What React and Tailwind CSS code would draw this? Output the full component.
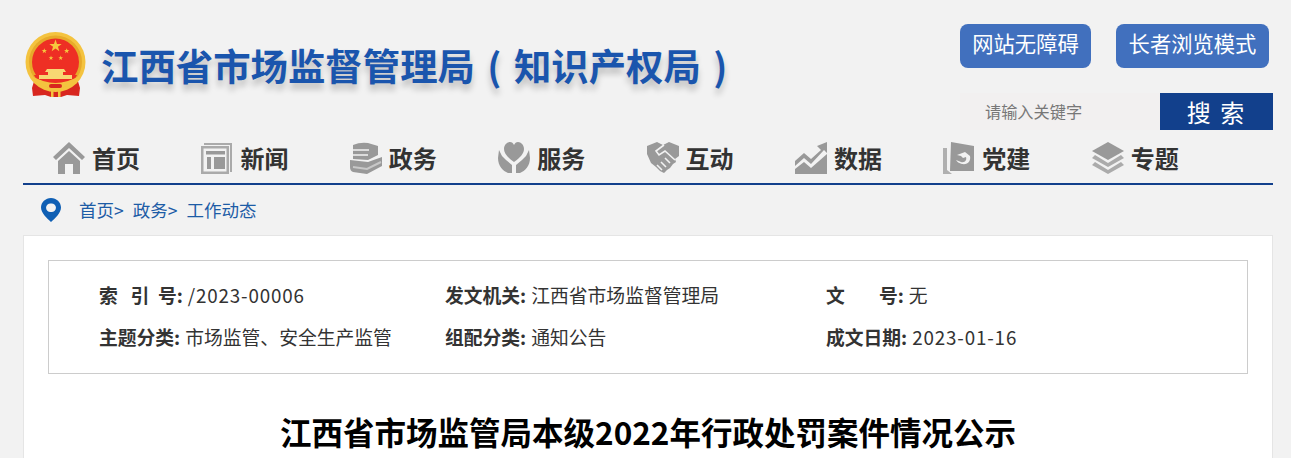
const FONT = "font-['Noto_Sans_CJK_SC','Noto_Sans',sans-serif]";
const BG = "#f2f2f2";

function Emblem() {
  const star = (cx, cy, r) => {
    const pts = [];
    for (let i = 0; i < 10; i++) {
      const rad = i % 2 ? r * 0.4 : r;
      const a = -Math.PI / 2 + (i * Math.PI) / 5;
      pts.push(`${cx + rad * Math.cos(a)},${cy + rad * Math.sin(a)}`);
    }
    return pts.join(" ");
  };
  return (
    <svg width="62" height="66" viewBox="0 0 62 66" className="shrink-0 blur-[0.4px]">
      {/* ribbons */}
      <path d="M10 46 L7 56 L8 64 L20 63 L26 65 L36 65 L42 63 L54 64 L55 56 L52 46 Z" fill="#d8261f" />
      {/* gold ring */}
      <circle cx="30.5" cy="30" r="30" fill="#f4c33f" />
      <circle cx="30.5" cy="30" r="26.5" fill="#e7aa2a" />
      <circle cx="30.5" cy="30" r="23.5" fill="#ee2f24" />
      <polygon points={star(30.5, 14, 6.5)} fill="#f6c83e" />
      <polygon points={star(19.3, 19, 2.8)} fill="#f6c83e" />
      <polygon points={star(41.7, 19, 2.8)} fill="#f6c83e" />
      <polygon points={star(26, 26, 2.5)} fill="#f6c83e" />
      <polygon points={star(35.7, 26, 2.5)} fill="#f6c83e" />
      {/* gate */}
      <path d="M22 37 H39 L41 40 H38 V43 H47 V47 H14 V43 H23 V40 H20 Z" fill="#f7d873" />
      <path d="M9 43 H14 V47 H47 V43 H52 L50 47 Q31 53 11 47 Z" fill="#ee2f24" />
      {/* gold scroll */}
      <path d="M7 44 Q30.5 58 54 44 L54 48 Q42 56 38 55 L38 58 L23 58 L23 55 Q19 56 7 48 Z" fill="#f4c33f" />
      <rect x="24" y="52" width="13" height="4" rx="2" fill="#d8261f" />
      <rect x="26" y="58" width="2.5" height="7" fill="#f4c33f" />
      <rect x="33" y="58" width="2.5" height="7" fill="#f4c33f" />
    </svg>
  );
}

const gap = { fill: "none", stroke: BG, strokeWidth: 1.6 };

const icons = {
  home: (
    <>
      <path d="M0 15 L16 0 L32 15 L29 18 L16 6 L3 18 Z" />
      <path d="M5 19 L16 9 L27 19 V32 H20 V22 H12 V32 H5 Z" />
    </>
  ),
  news: (
    <g fill="#aaaaaa">
      <path d="M3 1 H31 V30 H29 V3 H3 Z" />
      <path fillRule="evenodd" d="M0 4 H28 V32 H0 Z M2.5 6.5 V29.5 H25.5 V6.5 Z" />
      <rect x="5" y="9" width="19" height="3.5" fill="#999999" />
      <rect x="6" y="15" width="4" height="12" fill="#999999" />
      <rect x="13" y="15" width="11" height="12" fill="#999999" />
    </g>
  ),
  books: (
    <>
      <path d="M3 3 Q10 0 18 1 L28 4 V13 L18 18 L3 17 Z" />
      <path d="M2 8 H19 M2 13 H18" {...gap} />
      <path d="M0 18 L18 20 L32 15 V24 L17 32 L3 30 Q0 29 0 25 Z" />
      <path d="M3 25 L17 27 L31 20" fill="none" stroke="#c8c8c8" strokeWidth="2" />
    </>
  ),
  service: (
    <>
      <path d="M16 20 C9 15 6 11 6 7 C6 3 9 0 12 0 C14 0 15 1 16 3 C17 1 18 0 20 0 C23 0 26 3 26 7 C26 11 23 15 16 20 Z" />
      <path d="M1 8 L4 14 L8 18 L14 23 V31 H10 C5 29 0 24 0 16 Z" />
      <path d="M31 8 L28 14 L24 18 L18 23 V31 H22 C27 29 32 24 32 16 Z" />
    </>
  ),
  shake: (
    <>
      <path d="M0 4 L10 0 L16 3 L22 0 L32 4 V14 L28 17 L29 20 L26 22 L23 26 L20 28 L17 31 L13 29 L9 25 L4 21 L0 12 Z" />
      <path d="M17 3 L9 9 L12 13 L18 9 L28 18" {...gap} />
      <path d="M23 21 L18 16 M19 25 L14 20 M15 28 L10 23" {...gap} />
    </>
  ),
  chart: (
    <>
      <path d="M0 19 L9 11 L16 17 L26 8 L22 4 L32 0 V11 L29 8 L16 22 L9 16 L0 24 Z" />
      <path d="M0 27 L9 20 L16 26 L32 12 V32 H0 Z" />
    </>
  ),
  party: (
    <>
      <path d="M0 6 H4 V28 L9 32 H28 V32 H0 Z" fill="#b0b0b0" />
      <path fillRule="evenodd" d="M8 0 L31 4 V29 H7 Z M14 13 L22 10 L27 14 C28 19 25 23 19 22 C16 21 14 20 13 18 L18 20 C22 21 24 18 23 15 L20 16 L18 14 Z" />
    </>
  ),
  layers: (
    <>
      <path d="M16 0 L32 9 L16 18 L0 9 Z" />
      <path d="M3 13 L16 21 L29 13 L32 16 L16 25 L0 16 Z" opacity="0.8" />
      <path d="M3 20 L16 28 L29 20 L32 23 L16 32 L0 23 Z" opacity="0.8" />
    </>
  ),
};

const navItems = [
  ["首页", "home"],
  ["新闻", "news"],
  ["政务", "books"],
  ["服务", "service"],
  ["互动", "shake"],
  ["数据", "chart"],
  ["党建", "party"],
  ["专题", "layers"],
];

function NavItem({ label, icon }) {
  return (
    <a className="flex w-[148.4px] shrink-0 items-center gap-[7px]">
      <svg width="32" height="32" viewBox="0 0 32 32" fill="#999999" className="shrink-0">
        {icons[icon]}
      </svg>
      <span className="text-[24px] leading-[32px] font-bold text-[#333333]">{label}</span>
    </a>
  );
}

function Meta({ label, value, latin }) {
  return (
    <div className="flex h-[42px] items-center">
      <b className="font-bold whitespace-pre text-[#333333]">{label}</b>
      <span className={latin ? "ml-[5px] tracking-[0.85px] text-[#333333]" : "ml-[5px] text-[#333333]"}>{value}</span>
    </div>
  );
}

export default function App() {
  return (
    <div className={`h-[458px] overflow-hidden bg-[#f2f2f2] ${FONT}`}>
      <div className="ml-[23px] w-[1250px]">
        {/* header */}
        <header className="flex h-[130px] justify-between">
          <div className="flex items-start gap-[14px] pt-[32px] pl-[2px]">
            <Emblem />
            <h1 className="mt-[8px] text-[37.4px] leading-[50px] font-bold whitespace-nowrap text-[#1a55ad] [text-shadow:0_6px_6px_rgba(0,0,0,0.22)]">
              江西省市场监督管理局<span className="inline-block w-[39px] text-center">(</span>知识产权局
              <span className="inline-block w-[39px] text-center">)</span>
            </h1>
          </div>
          <div className="flex w-[313px] flex-col pt-[24px]">
            <div className="flex gap-[25px]">
              <a className="flex h-[44px] w-[131px] items-center justify-center rounded-lg bg-[#4170be] pb-[7px] text-[21.3px] text-white">
                网站无障碍
              </a>
              <a className="flex h-[44px] w-[153px] items-center justify-center rounded-lg bg-[#4170be] pb-[7px] text-[21.3px] text-white">
                长者浏览模式
              </a>
            </div>
            <div className="mt-[25px] flex h-[37px]">
              <div className="flex w-[200px] items-center bg-[#f2f0f0] pl-[25px] text-[16.2px] text-[#777777]">
                请输入关键字
              </div>
              <button className="w-[113px] bg-[#12408c] text-[24px] leading-[37px] tracking-[2px] text-white">
                搜 索
              </button>
            </div>
          </div>
        </header>

        {/* nav */}
        <nav className="flex h-[55px] items-start border-b-2 border-[#12408c] pt-[12px] pl-[30px]">
          {navItems.map(([label, icon]) => (
            <NavItem key={label} label={label} icon={icon} />
          ))}
        </nav>

        {/* breadcrumb */}
        <div className="flex h-[50px] items-center pl-[18px] text-[17.5px] text-[#1d5ca6]">
          <svg width="20" height="24" viewBox="0 0 20 24" className="mr-[18px] shrink-0">
            <path
              fillRule="evenodd"
              d="M10 0 C15.5 0 20 4.3 20 9.6 C20 15 14 20.5 10 24 C6 20.5 0 15 0 9.6 C0 4.3 4.5 0 10 0 Z M10 5.5 A4.3 4.3 0 1 0 10 14 A4.3 4.3 0 1 0 10 5.5 Z"
              fill="#0f5fb4"
            />
          </svg>
          <span>首页&gt;</span>
          <span className="ml-[9px]">政务&gt;</span>
          <span className="ml-[9px]">工作动态</span>
        </div>

        {/* article card */}
        <main className="h-[400px] border border-[#e5e5e5] bg-white px-[24px] pt-[24px]">
          <div className="flex h-[114px] border border-[#cccccc] pt-[13px] pl-[50px] text-[18.8px] whitespace-nowrap">
            <div className="w-[346px]">
              <Meta label="索   引  号:" value="/2023-00006" latin />
              <Meta label="主题分类:" value="市场监管、安全生产监管" />
            </div>
            <div className="w-[381px]">
              <Meta label="发文机关:" value="江西省市场监督管理局" />
              <Meta label="组配分类:" value="通知公告" />
            </div>
            <div>
              <Meta label="文        号:" value="无" />
              <Meta label="成文日期:" value="2023-01-16" latin />
            </div>
          </div>
          <h2 className="mt-[35px] text-center text-[31.5px] leading-[44px] font-bold text-black">
            江西省市场监管局本级2022年行政处罚案件情况公示
          </h2>
        </main>
      </div>
    </div>
  );
}
